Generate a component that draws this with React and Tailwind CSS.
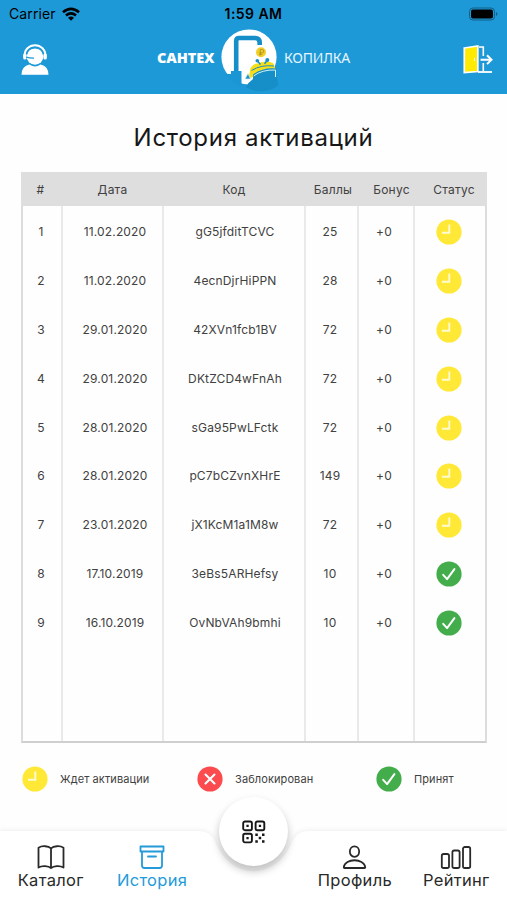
import React from 'react';

const rows = [
  ['1', '11.02.2020', 'gG5jfditTCVC', '25', '+0', 'wait'],
  ['2', '11.02.2020', '4ecnDjrHiPPN', '28', '+0', 'wait'],
  ['3', '29.01.2020', '42XVn1fcb1BV', '72', '+0', 'wait'],
  ['4', '29.01.2020', 'DKtZCD4wFnAh', '72', '+0', 'wait'],
  ['5', '28.01.2020', 'sGa95PwLFctk', '72', '+0', 'wait'],
  ['6', '28.01.2020', 'pC7bCZvnXHrE', '149', '+0', 'wait'],
  ['7', '23.01.2020', 'jX1KcM1a1M8w', '72', '+0', 'wait'],
  ['8', '17.10.2019', '3eBs5ARHefsy', '10', '+0', 'ok'],
  ['9', '16.10.2019', 'OvNbVAh9bmhi', '10', '+0', 'ok'],
];

const columns = [
  { title: '#', head: 'w-[39px]', body: 'w-[40px] pr-[2px] border-r-2' },
  { title: 'Дата', head: 'w-[105px]', body: 'w-[101px] pl-[5px] border-r-2' },
  { title: 'Код', head: 'w-[138px]', body: 'w-[142px] pl-[2px] border-r-2' },
  { title: 'Баллы', head: 'w-[60px]', body: 'w-[53px] pr-[3px] border-r-2' },
  { title: 'Бонус', head: 'w-[57px]', body: 'w-[56px] pr-[4px] border-r-2' },
  { title: 'Статус', head: 'w-[68px]', body: 'w-[70px] pr-[2px]' },
];

function Status({ type }) {
  const fill = { wait: '#ffe836', ok: '#43ad4b', blocked: '#fb4b4e' }[type];
  return (
    <svg className="block size-[26px] shrink-0" viewBox="0 0 26 26" fill="none">
      <circle cx="13" cy="13" r="12.6" fill={fill} />
      {type === 'wait' && <path d="M13.3 5.5v8.2H6" stroke="#fffbd2" strokeWidth="1.9" />}
      {type === 'ok' && <path d="M7.2 13.8l3.9 4.3 7.3-10" stroke="#fff" strokeWidth="2" strokeLinecap="round" strokeLinejoin="round" />}
      {type === 'blocked' && <path d="M8.5 8.5l9 9M17.5 8.5l-9 9" stroke="#fff" strokeWidth="2.1" strokeLinecap="round" />}
    </svg>
  );
}

function Logo() {
  return (
    <svg className="block h-[66px] w-[60px]" viewBox="0 0 60 66" fill="none">
      <circle cx="30" cy="30" r="27.6" fill="#fff" />
      <path d="M17.2 46V14q0-3 3-3H36q4.700 0 4.700 4.700V18" stroke="#168fc9" strokeWidth="4.600" />
      <path d="M12 44H22.500V59Q12.500 55.500 6.500 47H12z" fill="#1b96d4" />
      <circle cx="42" cy="25.200" r="5" fill="#f2cf26" />
      <path d="M41.300 28.500v-6h1.600q1.900 0 1.900 1.700t-1.900 1.700h-2.700M40.200 27.400h3" stroke="#a88a25" strokeWidth=".8" />
      <path d="M29.500 51.500L31.500 41Q35 36 39 36.500Q48 32.500 54.500 36.500L56.500 42Q43 42 34 50z" fill="#f6df18" />
      <path d="M32.500 43.500Q42 37.500 55 39" stroke="#168fc9" strokeWidth="1" />
      <path d="M38.500 34l3 3.500M48.500 33l-3 3.800" stroke="#168fc9" strokeWidth="1.500" />
      <circle cx="38.300" cy="33.700" r="1.800" fill="#168fc9" />
      <circle cx="48.300" cy="32.900" r="2" fill="#168fc9" />
      <path d="M34 47.500Q44 40 57.500 41.500V50l2 8q-5 5.500-16 6.200-11 .3-16.500-4.200 2-4.500 7-8z" fill="#168fc9" />
      <path d="M34.500 49Q43 42.500 56.500 43V50" stroke="#d3f1f5" strokeWidth="1" />
      <path d="M26 52l3-5.500 2.500 5.500h-5" fill="#168fc9" stroke="#d3f1f5" strokeWidth=".7" />
    </svg>
  );
}

function SupportIcon() {
  return (
    <svg className="block h-[31px] w-[28px]" viewBox="0 0 28 31">
      <ellipse cx="14" cy="12.300" rx="8.500" ry="8.400" fill="#fff" />
      <path d="M3.500 13.500C2.500-3 25.500-3 24.500 13.500" fill="none" stroke="#fff" strokeWidth="2" />
      <path d="M5.500 10.500C7.500 1.500 20.500 1.500 22.500 10.500" fill="none" stroke="#1e99d8" strokeWidth="1.500" />
      <rect x="2.200" y="9.500" width="3.300" height="6" rx="1.600" fill="#fff" />
      <rect x="22.500" y="9.500" width="3.300" height="6" rx="1.600" fill="#fff" />
      <path d="M5 13q3 1.200 8 1.200" stroke="#1e99d8" strokeWidth="1.300" fill="none" />
      <path d="M.5 30.800q0-8.500 8-10.300 5.500 4 11 0 8 1.800 8 10.300z" fill="#fff" />
    </svg>
  );
}

function ExitIcon() {
  return (
    <svg className="block h-[29px] w-[30px]" viewBox="0 0 30 29" fill="none">
      <path d="M16 2h4.300v9M20.300 18v8" stroke="#fff" strokeWidth="1.600" />
      <path d="M1.300 3L14.800 1v25.500L1.300 27.500z" fill="#ffea00" stroke="#fff" strokeWidth="1.700" />
      <path d="M15 27H29" stroke="#fff" strokeWidth="1.800" />
      <path d="M11.500 13v3" stroke="#fff" strokeWidth="1" />
      <path d="M17.500 14.700h10M24 10.300l4.500 4.400-4.500 4.400" stroke="#fff" strokeWidth="2" />
    </svg>
  );
}

const icons = {
  book: <path d="M14 3.500C11.500.9 5 .4 1.500 2.700V22.500c3.500-2.200 10-1.700 12.500.7 2.500-2.400 9-2.900 12.500-.7V2.700C23 .4 16.500.9 14 3.500zV23" />,
  archive: <path d="M2.500 1.500h23v5h-23zM4 6.500v14q0 2.500 2.500 2.500h15q2.500 0 2.500-2.500v-14M10 11.500h8" />,
  user: <path d="M13.500 1.400c-6.200 0-6.200 10.400 0 10.400s6.200-10.400 0-10.400zM3.500 23c-.6 0-.8-.3-.7-1 1.200-9 20.200-9 21.400 0 .1.700-.1 1-.7 1z" />,
  chart: (
    <>
      <rect x="-.2" y="9" width="7.200" height="14" rx="1.800" />
      <rect x="10.400" y="5.500" width="7.200" height="17.500" rx="1.800" />
      <rect x="21" y="2" width="7.200" height="21" rx="1.800" />
    </>
  ),
};

function NavItem({ icon, label, active, spacing }) {
  return (
    <div className={`flex w-1/5 flex-col items-center pt-[14px] ${active ? 'text-[#249bd8]' : 'text-[#292929]'}`}>
      <svg className="block h-[25px] w-[28px] overflow-visible" viewBox="0 0 28 25" fill="none" stroke="currentColor" strokeWidth="1.8" strokeLinejoin="round" strokeLinecap="round">
        {icons[icon]}
      </svg>
      <span className={`text-[16.5px] leading-[20px] ${spacing}`}>{label}</span>
    </div>
  );
}

function QrIcon() {
  return (
    <svg className="ml-px block size-[24px]" viewBox="0 0 24 24" fill="none" stroke="#171717" strokeWidth="1.900">
      <rect x="1.200" y="1.500" width="8.700" height="8.700" rx="1.800" />
      <rect x="13.600" y="1.500" width="8.700" height="8.700" rx="1.800" />
      <rect x="1.200" y="13.700" width="8.700" height="8.700" rx="1.800" />
      <path fill="#171717" stroke="none" d="M4.400 4.700h2.300V7H4.400zM16.800 4.700h2.300V7h-2.300zM4.400 16.900h2.300v2.300H4.400zM13.300 13.500h2.500v2.500h-2.500zM20 13.500h2.500v2.500H20zM16.700 16.800h2.500v2.500h-2.500zM13.300 20.200h2.500v2.500h-2.500zM20 20.200h2.500v2.500H20z" />
    </svg>
  );
}

export default function App() {
  return (
    <div className="flex h-[900px] w-[507px] flex-col overflow-hidden bg-[#fefefe] font-['Inter',sans-serif] text-[#414141]">
      <header className="flex h-[94px] shrink-0 flex-col bg-[#1e99d8] text-black">
        <div className="grid h-[27px] grid-cols-3 items-center px-[9px] text-[14px]">
          <div className="flex items-center gap-[6px] tracking-[0.1px]">
            <span>Carrier</span>
            <svg className="h-[14px] w-[18px]" viewBox="0 0 18 14" fill="none" stroke="#000" strokeWidth="2.700">
              <path d="M1 5.200q8-6.800 16 0M4 8.500q5-4.200 10 0" />
              <path d="M6 10.700q3-2.400 6 0L9 13.800z" fill="#000" stroke="none" />
            </svg>
          </div>
          <span className="text-center font-semibold tracking-[0.45px]">1:59 AM</span>
          <svg className="h-[14px] w-[30px] justify-self-end" viewBox="0 0 30 14">
            <rect x="1.500" y="1" width="25" height="12" rx="3.500" fill="none" stroke="#135f85" />
            <rect x="3" y="2.500" width="22" height="9" rx="2" />
            <path d="M28 5q3 2 0 4z" fill="#135f85" />
          </svg>
        </div>
        <div className="flex h-[67px] justify-between pl-[15px] pr-[14px]">
          <div className="flex">
            <div className="w-[142px] pl-[6px] pt-[17px]"><SupportIcon /></div>
            <div className="w-[62px] whitespace-nowrap pt-[21px] font-['Open_Sans',sans-serif] text-[14.500px] font-extrabold leading-[20px] tracking-[-0.1px] text-white">САНТЕХ</div>
            <Logo />
            <div className="pl-[5px] pt-[21px] font-['Noto_Sans',sans-serif] text-[14px] leading-[20px] tracking-[-0.2px] text-[#e5f5fc]">КОПИЛКА</div>
          </div>
          <div className="pt-[18px]"><ExitIcon /></div>
        </div>
      </header>
      <main className="flex flex-col px-[21px]">
        <h1 className="h-[78px] whitespace-nowrap pt-[28px] text-center text-[24px] leading-[32px] tracking-[0.7px] text-[#171717]">История активаций</h1>
        <section className="flex h-[571px] w-[466px] flex-col text-[12px]">
          <div className="flex h-[34px] shrink-0 items-center bg-[#dedede] pt-[2px] tracking-[0.25px]">
            {columns.map((c) => (
              <div key={c.title} className={`shrink-0 text-center ${c.head}`}>{c.title}</div>
            ))}
          </div>
          <div className="flex grow border-x-2 border-b-2 border-[#dcdcdc] border-b-[#cfcfcf] tracking-[0.15px]">
            {columns.map((c, i) => (
              <div key={c.title} className={`flex shrink-0 flex-col border-[#e9e9e9] ${c.body}`}>
                {rows.map((r) => (
                  <div key={r[0]} className="flex h-[48.9px] items-center justify-center pt-[3px]">
                    {i === 5 ? <Status type={r[i]} /> : r[i]}
                  </div>
                ))}
              </div>
            ))}
          </div>
        </section>
        <div className="flex h-[72px] items-center pl-px text-[11px] tracking-[0.1px]">
          <div className="flex w-[175px] items-center gap-[12px]"><Status type="wait" />Ждет активации</div>
          <div className="flex w-[179px] items-center gap-[12px]"><Status type="blocked" />Заблокирован</div>
          <div className="flex items-center gap-[12px]"><Status type="ok" />Принят</div>
        </div>
      </main>
      <nav className="relative mt-[16px] flex h-[69px] shrink-0">
        <svg className="absolute inset-x-0 top-[-12px] h-[81px] w-[507px] overflow-visible" viewBox="0 -12 507 81">
          <path d="M0 0H199Q210 0 215 10C230 50 276 50 292 11Q297 0 308 0H507V69H0Z" className="fill-white drop-shadow-[0_-1px_2px_rgba(0,0,0,0.06)]" />
        </svg>
        <div className="relative flex w-full">
          <NavItem icon="book" label="Каталог" spacing="tracking-[0.3px]" />
          <NavItem icon="archive" label="История" spacing="tracking-[0.3px]" active />
          <div className="flex w-1/5 justify-center">
            <button className="mt-[-34px] flex size-[69px] items-center justify-center rounded-full bg-white shadow-[0_5px_8px_rgba(0,0,0,0.25)]"><QrIcon /></button>
          </div>
          <NavItem icon="user" label="Профиль" spacing="tracking-[0.3px]" />
          <NavItem icon="chart" label="Рейтинг" spacing="tracking-[0.3px]" />
        </div>
      </nav>
    </div>
  );
}
